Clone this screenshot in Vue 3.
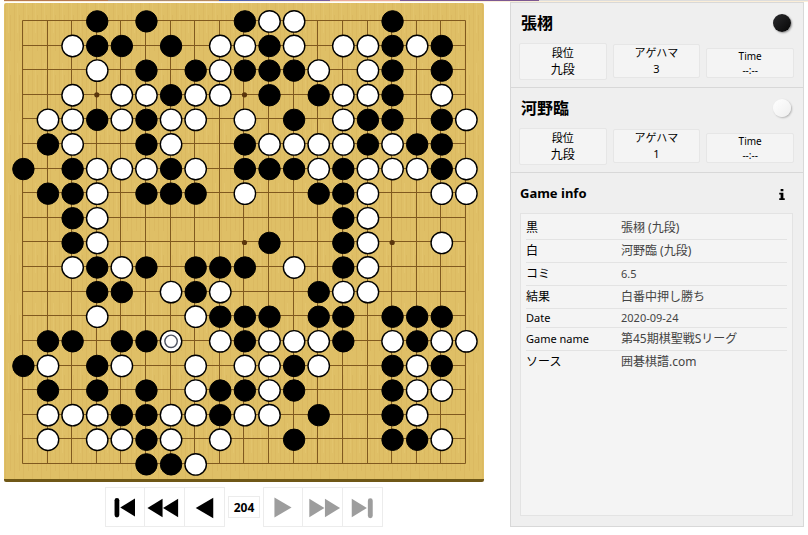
<template>
  <div class="page">
    <div class="strip"></div>
    <main class="viewer">
      <section class="left">
        <svg class="board" viewBox="0 0 480 476" role="img" aria-label="Go board">
          <defs>
            <pattern id="wood" width="9" height="60" patternUnits="userSpaceOnUse">
              <rect width="9" height="60" fill="#dfbf66" />
              <path d="M1.5 0V60M6.5 12V48" stroke="#dbb961" stroke-width="1" />
              <path d="M4.5 0V30" stroke="#e2c36c" stroke-width="1" />
            </pattern>
          </defs>
          <rect width="480" height="476" fill="url(#wood)" />
          <path :d="gridPath" class="grid" />
          <circle
            v-for="s in stars"
            :key="s.id"
            :cx="pos(s.x, 19)"
            :cy="pos(s.y, 18)"
            r="2.6"
            fill="#5a350c"
          />
          <g v-for="s in stones" :key="s.id">
            <circle
              :cx="pos(s.x, 19.4)"
              :cy="pos(s.y, 18.4)"
              r="10.7"
              :class="s.color === 'B' ? 'black' : 'white'"
            />
            <circle
              v-if="s.last"
              :cx="pos(s.x, 19.4)"
              :cy="pos(s.y, 18.4)"
              r="6.2"
              class="mark"
            />
          </g>
        </svg>

        <nav class="controls" aria-label="Moves">
          <button type="button" aria-label="First">
            <svg viewBox="0 0 40 40">
              <path d="M11.5 13V28.500" class="bar" />
              <path d="M30.5 11V30L15 20.500Z" />
            </svg>
          </button>
          <button type="button" aria-label="Fast backward">
            <svg viewBox="0 0 40 40">
              <path d="M18 11V30L2.5 20.500Z" />
              <path d="M34 11V30L18.5 20.500Z" />
            </svg>
          </button>
          <button type="button" aria-label="Previous">
            <svg viewBox="0 0 40 40">
              <path d="M29 10V31L11 20.500Z" />
            </svg>
          </button>
          <input v-model="move" class="move" type="text" aria-label="Move number" />
          <button type="button" aria-label="Next" disabled>
            <svg viewBox="0 0 40 40">
              <path d="M11 10V31L29 20.500Z" />
            </svg>
          </button>
          <button type="button" aria-label="Fast forward" disabled>
            <svg viewBox="0 0 40 40">
              <path d="M6.5 11V30L22 20.500Z" />
              <path d="M22.5 11V30L38 20.500Z" />
            </svg>
          </button>
          <button type="button" aria-label="Last" disabled>
            <svg viewBox="0 0 40 40">
              <path d="M9 11V30L24.5 20.500Z" />
              <path d="M28 13V28.500" class="bar" />
            </svg>
          </button>
        </nav>
      </section>

      <aside class="panel">
        <section v-for="p in players" :key="p.name" class="player">
          <div class="player-head">
            <h2>{{ p.name }}</h2>
            <span class="stone" :class="p.side"></span>
          </div>
          <div class="stats">
            <div class="stat rank">
              <span>段位</span>
              <span>{{ p.rank }}</span>
            </div>
            <div class="stat caps">
              <span>アゲハマ</span>
              <span>{{ p.caps }}</span>
            </div>
            <div class="stat time">
              <span>Time</span>
              <span>--:--</span>
            </div>
          </div>
        </section>

        <section class="info">
          <div class="info-head">
            <h2>Game info</h2>
            <button type="button" class="info-btn" aria-label="Game info">
              <svg viewBox="0 0 6 12">
                <path d="M1.5 0H4.5V2.5H1.5ZM0 4H4.5V10H6V12H0V10H1.5V6H0Z" />
              </svg>
            </button>
          </div>
          <div class="info-box">
            <table>
              <tbody>
                <tr
                  v-for="row in info"
                  :key="row[0]"
                  :class="{ short: isLatin(row[0]) && isLatin(row[1]) }"
                >
                  <th scope="row" :class="{ latin: isLatin(row[0]) }">{{ row[0] }}</th>
                  <td :class="{ latin: isLatin(row[1]) }">{{ row[1] }}</td>
                </tr>
              </tbody>
            </table>
          </div>
        </section>
      </aside>
    </main>
  </div>
</template>

<script setup>
import { ref } from "vue";

const STEP = 24.61;
const move = ref("204");

const pos = (i, origin) => origin + i * STEP;

// B = black, W = white, M = white with the last move mark
const rows = [
  "...B.B...BWW...B...",
  "..WBB.B.WWBW.WWBWB.",
  "...W.B.BWBBBW.WB.B.",
  "..W.WWBWW.B.BWWB.W.",
  ".WWBWBWW.W.B.WBB.BW",
  ".BW..BW..BWWWWBWBB.",
  "B.BWWWBW.BBBWBWWWBW",
  ".BBW.BBB.W..BBW..WW",
  "..BW.........BW....",
  "..BW......B..BW..W.",
  "..WBWB.BBB.W.BW....",
  "...BB.WBW...BWW....",
  "...W...WBBB.BB.BBB.",
  ".BB.BBM.WBWWWB.WBWW",
  "BW.BW..W.WWBW..BWB.",
  ".B.B.B.WBBWB...BWW.",
  ".WWWBBWWBWW.B..BW..",
  ".W.WWBW.W..B...BBW.",
  ".....BBW...........",
];

const stones = rows.flatMap((line, y) =>
  [...line]
    .map((c, x) => ({ id: `${x}-${y}`, x, y, color: c, last: c === "M" }))
    .filter((s) => s.color !== ".")
);

const stars = [3, 9, 15].flatMap((y) =>
  [3, 9, 15].map((x) => ({ id: `${x}-${y}`, x, y }))
);

//grid lines sit on half pixels so they stay thin
const snap = (n) => Math.round(n) + 0.5;
const lines = [];
for (let i = 0; i < 19; i++) {
  lines.push(`M18.5 ${snap(pos(i, 17))}H461.5`);
  lines.push(`M${snap(pos(i, 18))} 17.5V460.5`);
}
const gridPath = lines.join("");

const players = [
  { name: "張栩", side: "dark", rank: "九段", caps: 3 },
  { name: "河野臨", side: "light", rank: "九段", caps: 1 },
];

const info = [
  ["黒", "張栩 (九段)"],
  ["白", "河野臨 (九段)"],
  ["コミ", "6.5"],
  ["結果", "白番中押し勝ち"],
  ["Date", "2020-09-24"],
  ["Game name", "第45期棋聖戦Sリーグ"],
  ["ソース", "囲碁棋譜.com"],
];

const isLatin = (text) => /^[ -~]+$/.test(text);
</script>

<style>
body {
  margin: 0;
  background: #ffffff;
}
</style>

<style scoped>
.page {
  font-family: "Noto Sans", "Noto Sans CJK JP", sans-serif;
  color: #000000;
}

.strip {
  height: 1px;
  margin: 0 0 1px 4px;
  background: linear-gradient(
    90deg,
    #b5774e 0 104px,
    #9c8c86 104px,
    #b5875a 215px,
    #4560b4 215px,
    #7a5c9c 326px,
    #e8a79a 326px 396px,
    #7d5892 396px 535px,
    #dddddd 535px
  );
  box-shadow: 0 1px 0 #fbeed8;
}

.viewer {
  display: grid;
  grid-template-columns: minmax(0, 1fr) 294px;
  gap: 26px;
  padding: 0 4px;
}

.left {
  padding-top: 1px;
}

.board {
  display: block;
  width: 100%;
  border-bottom: 3px solid #6f5716;
  border-radius: 2px;
}

.grid {
  fill: none;
  stroke: #80591f;
  stroke-width: 1;
}

.black {
  fill: #000000;
  stroke: #000000;
}

.white {
  fill: #ffffff;
  stroke: #000000;
  stroke-width: 1.4;
}

.mark {
  fill: none;
  stroke: #4d5260;
  stroke-width: 1.4;
}

.controls {
  display: flex;
  justify-content: center;
  align-items: center;
  margin-top: 5px;
}

.controls button {
  box-sizing: border-box;
  width: 40px;
  height: 40px;
  padding: 0;
  border: 1px solid #ececec;
  background: #ffffff;
  color: #000000;
  cursor: pointer;
}

.controls button + button {
  border-left: none;
}

.controls button:disabled {
  color: #9d9d9d;
  cursor: default;
}

.controls svg {
  display: block;
  width: 100%;
  fill: currentColor;
}

.bar {
  stroke: currentColor;
  stroke-width: 5;
  stroke-linecap: round;
}

.move {
  box-sizing: border-box;
  width: 32px;
  height: 22px;
  margin: 0 3px;
  padding: 0;
  border: 1px solid #ececec;
  font: bold 12px "Noto Sans", sans-serif;
  text-align: center;
  background: #ffffff;
}

.panel {
  box-sizing: border-box;
  display: flex;
  flex-direction: column;
  border: 1px solid #d8d8d8;
  background: #efefef;
}

.player {
  padding: 8px 9px 7px 8px;
  border-bottom: 1px solid #d8d8d8;
}

.player-head,
.info-head {
  display: flex;
  align-items: center;
  justify-content: space-between;
}

.player-head {
  height: 24px;
  padding: 0 3px 0 2px;
}

h2 {
  margin: 0;
  font-size: 16px;
  line-height: 24px;
  font-weight: 700;
}

.stone {
  width: 18px;
  height: 18px;
  border-radius: 50%;
  box-shadow: 1px 1px 2px rgba(0, 0, 0, 0.4);
}

.stone.dark {
  background: linear-gradient(135deg, #2b2b2e, #050505);
}

.stone.light {
  background: linear-gradient(135deg, #ffffff, #eeeeee);
  box-shadow: 1px 1px 2px rgba(0, 0, 0, 0.25);
}

.stats {
  display: grid;
  grid-template-columns: repeat(3, 1fr);
  gap: 6px;
  align-items: end;
  padding-top: 8px;
}

.stat {
  display: flex;
  flex-direction: column;
  align-items: center;
  margin-bottom: 2px;
  border: 1px solid #e6e6e6;
  border-radius: 2px;
  background: #f4f4f4;
  font-size: 11px;
  line-height: 16px;
}

.rank {
  margin-bottom: 0;
  font-size: 12px;
  line-height: 18px;
}

.rank span:first-child {
  font-size: 11px;
  line-height: 17px;
}

.time {
  font-size: 10px;
  line-height: 14px;
}

.info {
  flex: 1;
  display: flex;
  flex-direction: column;
  padding: 8px 10px 10px 9px;
}

.info-head {
  height: 24px;
  padding: 0 8px 8px 0;
}

.info-head h2 {
  font-size: 13px;
}

.info-btn {
  padding: 2px 0 0;
  border: none;
  background: none;
  cursor: pointer;
}

.info-btn svg {
  display: block;
  width: 6px;
  height: 11px;
}

.info-box {
  flex: 1;
  padding: 3px 5px;
  border: 1px solid #e3e3e3;
  background: #f4f4f4;
}

table {
  width: 100%;
  border-collapse: collapse;
  table-layout: fixed;
}

th,
td {
  padding: 0;
  height: 22px;
  text-align: left;
  font-size: 12px;
  line-height: 18px;
  font-weight: 400;
  border-bottom: 1px solid #e3e3e3;
}

th {
  width: 95px;
}

td {
  color: #444444;
}

.latin {
  font-size: 11px;
}

.short th,
.short td {
  height: 18px;
}

tr:last-child th,
tr:last-child td {
  border-bottom: none;
}
</style>
